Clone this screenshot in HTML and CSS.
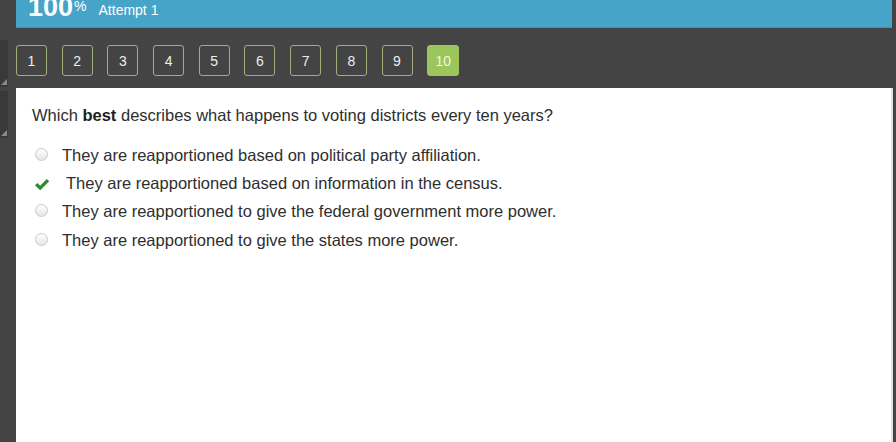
FILE: index.html
```html
<!DOCTYPE html>
<html>
<head>
<meta charset="utf-8">
<link rel="stylesheet" href="styles.css">
</head>
<body>
<div class="page">
  <div class="rail">
    <div class="rail-top"></div>
    <div class="handle"></div>
    <div class="handle second"></div>
  </div>
  <div class="main">
    <div class="scorebar">
      <span class="score">100</span><span class="pct">%</span>
      <span class="attempt">Attempt 1</span>
    </div>
    <div class="navbar">
      <span class="qbtn">1</span>
      <span class="qbtn">2</span>
      <span class="qbtn">3</span>
      <span class="qbtn">4</span>
      <span class="qbtn">5</span>
      <span class="qbtn">6</span>
      <span class="qbtn">7</span>
      <span class="qbtn">8</span>
      <span class="qbtn">9</span>
      <span class="qbtn current">10</span>
    </div>
    <div class="content">
      <p class="question">Which <b>best</b> describes what happens to voting districts every ten years?</p>
      <ul class="options">
        <li class="option"><span class="radio"></span><span class="label">They are reapportioned based on political party affiliation.</span></li>
        <li class="option correct"><svg class="check" width="16" height="13" viewBox="0 0 16 13"><path d="M1 7.2 L3.4 5 L6.2 7.8 L12.8 1 L15.2 3.3 L6.2 12.3 Z" fill="#2f8a2f"/></svg><span class="label">They are reapportioned based on information in the census.</span></li>
        <li class="option"><span class="radio"></span><span class="label">They are reapportioned to give the federal government more power.</span></li>
        <li class="option"><span class="radio"></span><span class="label">They are reapportioned to give the states more power.</span></li>
      </ul>
    </div>
  </div>
</div>
</body>
</html>
```

FILE: styles.css
```css
html, body {
  margin: 0;
  padding: 0;
  height: 100%;
  background: #444444;
  font-family: "Liberation Sans", Arial, sans-serif;
  overflow: hidden;
}
.page {
  display: flex;
  height: 442px;
}
.rail {
  width: 16px;
  flex: none;
  display: flex;
  flex-direction: column;
}
.rail-top {
  height: 40px;
}
.handle {
  width: 8px;
  height: 47px;
  background: #393939;
  position: relative;
}
.handle.second {
  margin-top: 4px;
}
.handle::after {
  content: "";
  position: absolute;
  right: 1px;
  bottom: 2px;
  width: 0;
  height: 0;
  border-left: 6px solid transparent;
  border-bottom: 6px solid #8a8a8a;
}
.main {
  width: 877px;
  flex: none;
  display: flex;
  flex-direction: column;
}
.scorebar {
  height: 28px;
  background: #46a4c9;
  border-bottom: 1px solid #3f95b8;
  box-sizing: border-box;
  display: flex;
  align-items: flex-start;
  color: #ffffff;
  padding-left: 12px;
  margin-right: 1px;
  overflow: hidden;
}
.score {
  font-size: 27px;
  font-weight: bold;
  line-height: 27px;
  margin-top: -6px;
}
.pct {
  font-size: 14px;
  line-height: 14px;
  margin-top: -1px;
  margin-left: 1px;
}
.attempt {
  font-size: 14px;
  line-height: 16px;
  margin-left: 12px;
  margin-top: 2px;
}
.navbar {
  height: 60px;
  display: flex;
  align-items: flex-start;
  gap: 14.7px;
  padding-top: 17px;
  box-sizing: border-box;
}
.qbtn {
  width: 31px;
  height: 31px;
  box-sizing: border-box;
  border: 1px solid #a3ad7a;
  border-radius: 3px;
  display: flex;
  align-items: center;
  justify-content: center;
  color: #eeeeee;
  font-size: 14px;
}
.qbtn.current {
  width: 32px;
  background: #9cc65b;
  border-color: #9cc65b;
  color: #f2f7e0;
}
.content {
  flex: 1;
  background: #ffffff;
  border-right: 2px solid #e0e0e0;
  padding: 18px 0 0 16px;
  color: #2e2e2e;
}
.question {
  margin: 0;
  font-size: 16.5px;
  line-height: 18px;
}
.question b {
  color: #1e1e1e;
}
.options {
  list-style: none;
  margin: 17px 0 0 0;
  padding: 0;
}
.option {
  height: 28.3px;
  display: flex;
  align-items: center;
  font-size: 16.5px;
}
.radio {
  width: 13px;
  height: 13px;
  box-sizing: border-box;
  border: 1px solid #c9c9c9;
  border-radius: 50%;
  background: linear-gradient(#ffffff, #e6e6e6);
  margin-left: 3px;
  margin-right: 14px;
  margin-top: -2px;
}
.check {
  margin-left: 2px;
  margin-right: 16px;
  margin-top: 2px;
}
```
